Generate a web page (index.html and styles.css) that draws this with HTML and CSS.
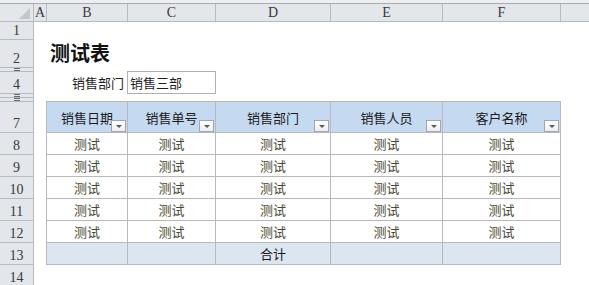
FILE: index.html
```html
<!DOCTYPE html>
<html lang="zh">
<head>
<meta charset="utf-8">
<link rel="stylesheet" href="styles.css">
</head>
<body>
<div class="sheet">
  <div class="topband"></div>
  <div class="colhdr">
    <div class="ch corner"><span class="tri"></span></div>
    <div class="ch ca">A</div>
    <div class="ch cb">B</div>
    <div class="ch cc">C</div>
    <div class="ch cd">D</div>
    <div class="ch ce">E</div>
    <div class="ch cf">F</div>
    <div class="ch cg"></div>
  </div>
  <div class="main">
    <div class="rowhdr">
      <div class="rh h18">1</div>
      <div class="rh h28">2</div>
      <div class="rh h4"><span class="eq"></span></div>
      <div class="rh h22">4</div>
      <div class="rh h4"><span class="eq"></span></div>
      <div class="rh h4"><span class="eq"></span></div>
      <div class="rh h31">7</div>
      <div class="rh h22">8</div>
      <div class="rh h22">9</div>
      <div class="rh h22">10</div>
      <div class="rh h22">11</div>
      <div class="rh h22">12</div>
      <div class="rh h22">13</div>
      <div class="rh h22">14</div>
    </div>
    <div class="body">
      <div class="r1"></div>
      <div class="r2"><h1 class="title">测试表</h1></div>
      <div class="r3"></div>
      <div class="r4">
        <span class="lbl">销售部门</span>
        <span class="inp">销售三部</span>
      </div>
      <div class="r56"></div>
      <div class="tbl">
        <div class="th">销售日期<span class="flt"></span></div>
        <div class="th">销售单号<span class="flt"></span></div>
        <div class="th">销售部门<span class="flt"></span></div>
        <div class="th">销售人员<span class="flt"></span></div>
        <div class="th">客户名称<span class="flt"></span></div>

        <div class="td">测试</div><div class="td">测试</div><div class="td">测试</div><div class="td">测试</div><div class="td">测试</div>
        <div class="td">测试</div><div class="td">测试</div><div class="td">测试</div><div class="td">测试</div><div class="td">测试</div>
        <div class="td">测试</div><div class="td">测试</div><div class="td">测试</div><div class="td">测试</div><div class="td">测试</div>
        <div class="td">测试</div><div class="td">测试</div><div class="td">测试</div><div class="td">测试</div><div class="td">测试</div>
        <div class="td">测试</div><div class="td">测试</div><div class="td">测试</div><div class="td">测试</div><div class="td">测试</div>

        <div class="tt"></div><div class="tt"></div><div class="tt">合计</div><div class="tt"></div><div class="tt"></div>
      </div>
    </div>
  </div>
</div>
</body>
</html>
```

FILE: styles.css
```css
* { box-sizing: border-box; margin: 0; padding: 0; }
html, body { background: #ffffff; }
body {
  width: 589px;
  height: 285px;
  overflow: hidden;
  font-family: "Noto Sans CJK SC", "Noto Sans", sans-serif;
}
.sheet { display: flex; flex-direction: column; width: 589px; }
.topband { height: 3px; background: #eeeff1; }

.colhdr {
  display: flex;
  height: 19px;
  border-top: 1px solid #a9adb3;
  border-bottom: 1px solid #b7bbc1;
  background: #e3e6ea;
}
.ch {
  flex: none;
  height: 17px;
  border-right: 1px solid #b7bbc1;
  display: flex;
  align-items: center;
  justify-content: center;
  font-family: "Liberation Serif", "DejaVu Serif", serif;
  font-size: 14px;
  line-height: 17px;
  color: #3a3a3a;
}
.corner { width: 34px; position: relative; }
.tri {
  position: absolute;
  right: 3px;
  bottom: 2px;
  width: 0;
  height: 0;
  border-left: 11px solid transparent;
  border-bottom: 11px solid #c3c7cc;
}
.ca { width: 13px; }
.cb { width: 81px; }
.cc { width: 88px; }
.cd { width: 115px; }
.ce { width: 112px; }
.cf { width: 118px; }
.cg { flex: 1; border-right: none; }

.main { display: flex; }
.rowhdr {
  flex: none;
  width: 34px;
  border-right: 1px solid #b7bbc1;
  background: #e3e6ea;
  display: flex;
  flex-direction: column;
}
.rh {
  border-bottom: 1px solid #b7bbc1;
  display: flex;
  align-items: flex-end;
  justify-content: center;
  font-family: "Liberation Serif", "DejaVu Serif", serif;
  font-size: 14px;
  line-height: 14px;
  padding-bottom: 1px;
  color: #3a3a3a;
  overflow: hidden;
}
.h18 { height: 18px; }
.h28 { height: 28px; }
.h4 { height: 4px; padding-bottom: 0; align-items: center; }
.h22 { height: 22px; }
.h31 { height: 31px; }
.eq {
  display: block;
  width: 6px;
  height: 3px;
  border-top: 1px solid #6a6a6a;
  border-bottom: 1px solid #6a6a6a;
}

.body { flex: 1; display: flex; flex-direction: column; background: #ffffff; }
.r1 { height: 18px; }
.r2 {
  height: 28px;
  display: flex;
  align-items: flex-end;
  padding-left: 16px;
  padding-bottom: 3px;
}
.title {
  font-size: 20px;
  font-weight: 700;
  line-height: 24px;
  color: #111111;
}
.r3 { height: 3px; }
.r4 { height: 23px; display: flex; }
.lbl {
  width: 93px;
  text-align: right;
  padding-right: 3px;
  font-size: 13px;
  line-height: 23px;
  color: #1e1e1e;
}
.inp {
  width: 89px;
  height: 23px;
  border: 1px solid #b0b0b0;
  padding-left: 2px;
  font-size: 13px;
  line-height: 21px;
  color: #1e1e1e;
}
.r56 { height: 7px; }

.tbl {
  margin-left: 12px;
  width: 515px;
  display: grid;
  grid-template-columns: 80px 87px 114px 111px 117px;
  grid-template-rows: 30px repeat(6, 21px);
  gap: 1px;
  border: 1px solid #b9b9b9;
  background: #b9b9b9;
}
.th, .td, .tt {
  display: flex;
  align-items: center;
  justify-content: center;
  font-size: 13px;
}
.th {
  position: relative;
  background: #c5d9f1;
  color: #1b1b1b;
}
.td { background: #ffffff; color: #4a4a33; }
.tt { background: #dce6f1; color: #1b1b1b; }
.flt {
  position: absolute;
  right: 1px;
  bottom: 0;
  width: 15px;
  height: 12px;
  border: 1px solid #a3a7ad;
  background: linear-gradient(#ffffff, #eceef1);
  display: flex;
  align-items: center;
  justify-content: center;
}
.flt::after {
  content: "";
  width: 0;
  height: 0;
  border-left: 3px solid transparent;
  border-right: 3px solid transparent;
  border-top: 3px solid #555a60;
}
```
